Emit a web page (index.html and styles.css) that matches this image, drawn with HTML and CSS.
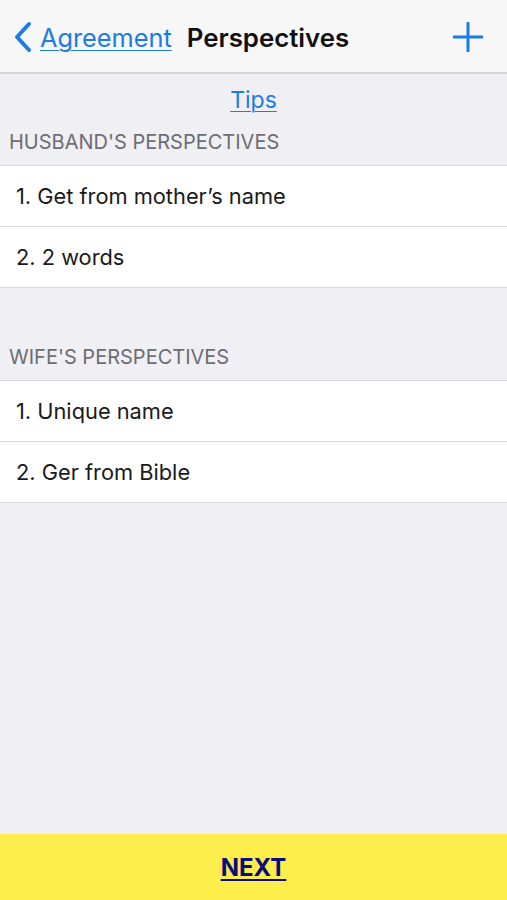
FILE: index.html
```html
<!DOCTYPE html>
<html lang="en">
<head>
    <meta charset="UTF-8">
    <title>Perspectives</title>
    <link rel="stylesheet" href="styles.css">
</head>
<body>
    <div class="page">
        <header class="navbar">
            <a class="back" href="#">
                <svg class="chevron" width="22" height="32" viewBox="0 0 22 32">
                    <path d="M17 3 L5 16 L17 29" fill="none" stroke="#1b7ce4" stroke-width="4" stroke-linecap="round" stroke-linejoin="round"/>
                </svg>
                <span class="back-text">Agreement</span>
            </a>
            <span class="title">Perspectives</span>
            <a class="add" href="#">
                <svg width="30" height="30" viewBox="0 0 30 30">
                    <path d="M15 1 V29 M1 15 H29" stroke="#1b7ce4" stroke-width="3" stroke-linecap="round"/>
                </svg>
            </a>
        </header>

        <div class="tips"><a href="#">Tips</a></div>

        <div class="section-head first">HUSBAND'S PERSPECTIVES</div>
        <ul class="list">
            <li>1. Get from mother’s name</li>
            <li>2. 2 words</li>
        </ul>

        <div class="section-head">WIFE'S PERSPECTIVES</div>
        <ul class="list">
            <li>1. Unique name</li>
            <li>2. Ger from Bible</li>
        </ul>

        <footer class="footer">
            <a href="#">NEXT</a>
        </footer>
    </div>
</body>
</html>
```

FILE: styles.css
```css
body {
    margin: 0;
    background-color: #efeff4;
    font-family: Inter, "Liberation Sans", Arial, sans-serif;
}

.page {
    display: flex;
    flex-direction: column;
    height: 900px;
}

.navbar {
    display: flex;
    align-items: center;
    height: 72px;
    box-sizing: border-box;
    padding: 2px 24px 0 12px;
    background-color: #f7f7f8;
    border-bottom: 2px solid #d4d4d8;
    height: 74px;
}

.back {
    display: flex;
    align-items: center;
    gap: 6px;
    color: #1b7ce4;
    text-decoration: none;
}

.back-text {
    font-size: 25.3px;
    text-decoration: underline;
    text-decoration-thickness: 1px;
    text-underline-offset: 3px;
}

.title {
    margin-left: 15px;
    font-size: 25.8px;
    font-weight: 600;
    color: #111;
}

.add {
    margin-left: auto;
    display: flex;
}

.tips {
    height: 50px;
    box-sizing: border-box;
    padding-top: 2px;
    display: flex;
    align-items: center;
    justify-content: center;
}

.tips a {
    color: #1b7ce4;
    font-size: 23px;
    text-underline-offset: 3px;
    text-decoration-thickness: 1px;
}

.section-head {
    height: 50px;
    display: flex;
    align-items: flex-end;
    padding: 0 0 11px 9px;
    box-sizing: border-box;
    color: #6d6d72;
    font-size: 20px;
    margin-top: 42px;
}

.section-head.first {
    margin-top: 0;
    height: 41px;
    padding-bottom: 11px;
}

.list {
    list-style: none;
    margin: 0;
    padding: 0;
    background-color: #fff;
    border-top: 1px solid #d9d9dd;
}

.list li {
    height: 60px;
    display: flex;
    align-items: center;
    padding-left: 16px;
    font-size: 21.8px;
    color: #1a1a1a;
    border-bottom: 1px solid #d9d9dd;
}

.footer {
    margin-top: auto;
    height: 66px;
    display: flex;
    align-items: center;
    justify-content: center;
    background-color: #fdee4b;
}

.footer a {
    color: #0b0b7e;
    font-size: 24px;
    font-weight: 700;
    text-underline-offset: 3px;
}
```
